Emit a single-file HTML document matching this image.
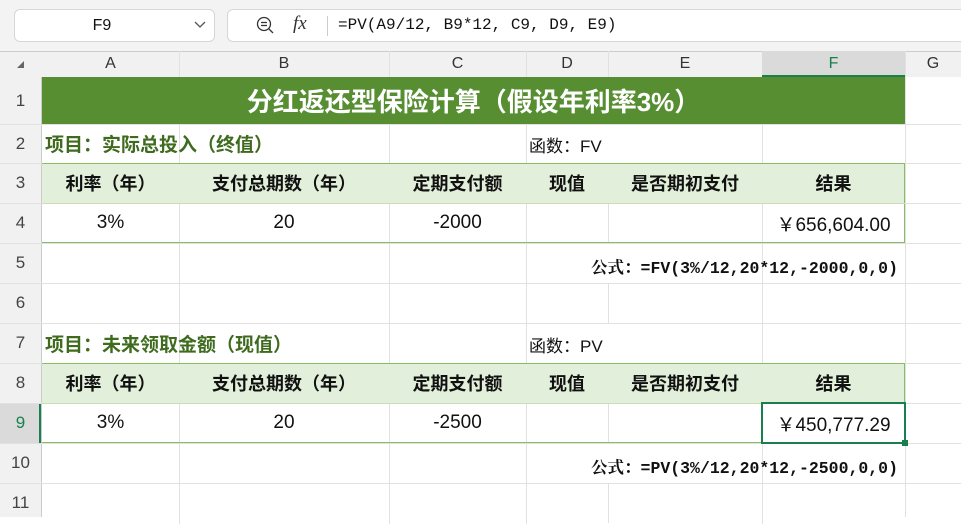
<!DOCTYPE html>
<html><head><meta charset="utf-8"><style>
*{margin:0;padding:0;box-sizing:border-box}
body{width:961px;height:516px;overflow:hidden;background:#fff;font-family:"Liberation Sans","Noto Sans CJK SC",sans-serif;position:relative}
.a{position:absolute}
.c{position:absolute;display:flex;align-items:center;justify-content:center;font-size:18px;color:#111}
.hl{position:absolute;background:#e1e1e1}
.mono{font-family:"Liberation Mono","Noto Serif CJK SC",monospace}
</style></head><body>
<div class="a" style="left:0;top:0;width:961px;height:51px;background:#f3f3f3"></div>
<div class="a" style="left:14px;top:9px;width:201px;height:33px;background:#fff;border:1px solid #d6d6d6;border-radius:6px"></div>
<div class="c" style="left:80px;top:9px;width:44px;height:33px;font-size:16px">F9</div>
<svg class="a" style="left:194px;top:20px" width="12" height="10"><path d="M1 2 L6 7 L11 2" stroke="#555" fill="none" stroke-width="1.3"/></svg>
<div class="a" style="left:227px;top:9px;width:740px;height:33px;background:#fff;border:1px solid #d6d6d6;border-radius:6px"></div>
<svg class="a" style="left:256px;top:16px" width="20" height="20"><circle cx="8" cy="8" r="6.5" stroke="#333" fill="none" stroke-width="1.3"/><path d="M5 6.5h6M5 9.5h6M13 13l4 4" stroke="#333" stroke-width="1.3"/></svg>
<div class="a" style="left:293px;top:13px;font-family:'Liberation Serif',serif;font-style:italic;font-size:19px;color:#333">fx</div>
<div class="a" style="left:327px;top:16px;width:1px;height:20px;background:#ccc"></div>
<div class="a mono" style="left:338px;top:16px;font-size:16px;color:#111">=PV(A9/12,&nbsp;B9*12,&nbsp;C9,&nbsp;D9,&nbsp;E9)</div>
<!-- column headers -->
<div class="a" style="left:0;top:51px;width:961px;height:26px;background:#f1f1f1;border-top:1px solid #ccc"></div>
<div class="a" style="left:762px;top:51px;width:143px;height:26px;background:#dadada;border-bottom:2px solid #1a7f4f"></div>
<svg class="a" style="left:16px;top:60px" width="10" height="10"><path d="M8 1 L8 8 L1 8Z" fill="#666"/></svg>
<!-- row headers -->
<div class="a" style="left:0;top:77px;width:42px;height:440px;background:#f1f1f1;border-right:1px solid #ccc"></div>
<div class="a" style="left:0;top:403px;width:41px;height:40px;background:#dadada;border-right:2px solid #1a7f4f"></div>
<!-- grid lines -->
<div class="hl" style="left:179px;top:51px;width:1px;height:26px"></div>
<div class="hl" style="left:389px;top:51px;width:1px;height:26px"></div>
<div class="hl" style="left:526px;top:51px;width:1px;height:26px"></div>
<div class="hl" style="left:608px;top:51px;width:1px;height:26px"></div>
<div class="hl" style="left:905px;top:51px;width:1px;height:26px"></div>
<div class="hl" style="left:179px;top:124px;width:1px;height:400px"></div>
<div class="hl" style="left:389px;top:124px;width:1px;height:400px"></div>
<div class="hl" style="left:526px;top:124px;width:1px;height:400px"></div>
<div class="hl" style="left:608px;top:163px;width:1px;height:80px"></div>
<div class="hl" style="left:608px;top:283px;width:1px;height:40px"></div>
<div class="hl" style="left:608px;top:363px;width:1px;height:80px"></div>
<div class="hl" style="left:608px;top:483px;width:1px;height:40px"></div>
<div class="hl" style="left:762px;top:124px;width:1px;height:400px"></div>
<div class="hl" style="left:905px;top:77px;width:1px;height:440px"></div>
<div class="hl" style="left:0;top:124px;width:961px;height:1px"></div>
<div class="hl" style="left:0;top:163px;width:961px;height:1px"></div>
<div class="hl" style="left:0;top:203px;width:961px;height:1px"></div>
<div class="hl" style="left:0;top:243px;width:961px;height:1px"></div>
<div class="hl" style="left:0;top:283px;width:961px;height:1px"></div>
<div class="hl" style="left:0;top:323px;width:961px;height:1px"></div>
<div class="hl" style="left:0;top:363px;width:961px;height:1px"></div>
<div class="hl" style="left:0;top:403px;width:961px;height:1px"></div>
<div class="hl" style="left:0;top:443px;width:961px;height:1px"></div>
<div class="hl" style="left:0;top:483px;width:961px;height:1px"></div>
<div id="colh"></div>
<!-- title -->
<div class="c" style="left:42px;top:77px;width:863px;height:47px;background:#578e32;color:#fff;font-weight:bold;font-size:26px">分红返还型保险计算（假设年利率3%）</div>
<!-- tables -->
<div class="a" style="left:42px;top:163px;width:863px;height:40px;background:#e2efda"></div>
<div class="a" style="left:42px;top:363px;width:863px;height:40px;background:#e2efda"></div>
<div class="a" style="left:42px;top:163px;width:863px;height:80px;border:1px solid #86bf5f;border-left:none"></div>
<div class="a" style="left:42px;top:363px;width:863px;height:80px;border:1px solid #86bf5f;border-left:none"></div>
<div class="a" style="left:42px;top:203px;width:863px;height:1px;background:#c6e0b4"></div>
<div class="a" style="left:42px;top:403px;width:863px;height:1px;background:#c6e0b4"></div>
<div id="cells"></div>
<div class="a" style="left:761px;top:402px;width:145px;height:42px;border:2px solid #1a7f4f"></div>
<div class="a" style="left:902px;top:440px;width:6px;height:6px;background:#1a7f4f"></div>
<script>
var cols=[42,179,389,526,608,762,905,961],L='ABCDEFG';
var h='';
for(var i=0;i<7;i++)h+='<div class="c" style="left:'+cols[i]+'px;top:51px;width:'+(cols[i+1]-cols[i])+'px;height:26px;font-size:16px;color:'+(i==5?'#1a7f4f':'#333')+'">'+L[i]+'</div>';
var rows=[77,124,163,203,243,283,323,363,403,443,483,523];
for(var r=0;r<11;r++)h+='<div class="c" style="left:0;top:'+rows[r]+'px;width:41px;height:'+(rows[r+1]-rows[r])+'px;font-size:17px;color:'+(r==8?'#1a7f4f':'#444')+'">'+(r+1)+'</div>';
document.getElementById('colh').innerHTML=h;
var c='';
function blk(t,name,fn,pv,res,f){
c+='<div class="a" style="left:45px;top:'+(t+7)+'px;font-size:19px;font-weight:bold;color:#3f6b1f">项目：'+name+'</div>';
c+='<div class="a" style="left:529px;top:'+(t+9)+'px;font-size:17px;color:#111">函数：'+fn+'</div>';
var hd=['利率（年）','支付总期数（年）','定期支付额','现值','是否期初支付','结果'];
var v=['3%','20',pv,'','',res];
for(var i=0;i<6;i++){
c+='<div class="c" style="left:'+cols[i]+'px;top:'+(t+40)+'px;width:'+(cols[i+1]-cols[i])+'px;height:40px;font-weight:bold;font-size:18px">'+hd[i]+'</div>';
c+='<div class="c" style="left:'+cols[i]+'px;top:'+(t+80)+'px;width:'+(cols[i+1]-cols[i])+'px;height:40px;font-size:19px">'+v[i]+'</div>';}
c+='<div class="a" style="right:63px;top:'+(t+131)+'px;font-size:16.5px;font-weight:bold;color:#111"><span style="font-family:\'Noto Serif CJK SC\',serif">公式：</span><span class="mono">'+f+'</span></div>';
}
blk(123,'实际总投入（终值）','FV','-2000','￥656,604.00','=FV(3%/12,20*12,-2000,0,0)');
blk(323,'未来领取金额（现值）','PV','-2500','￥450,777.29','=PV(3%/12,20*12,-2500,0,0)');
document.getElementById('cells').innerHTML=c;
</script>
</body></html>
